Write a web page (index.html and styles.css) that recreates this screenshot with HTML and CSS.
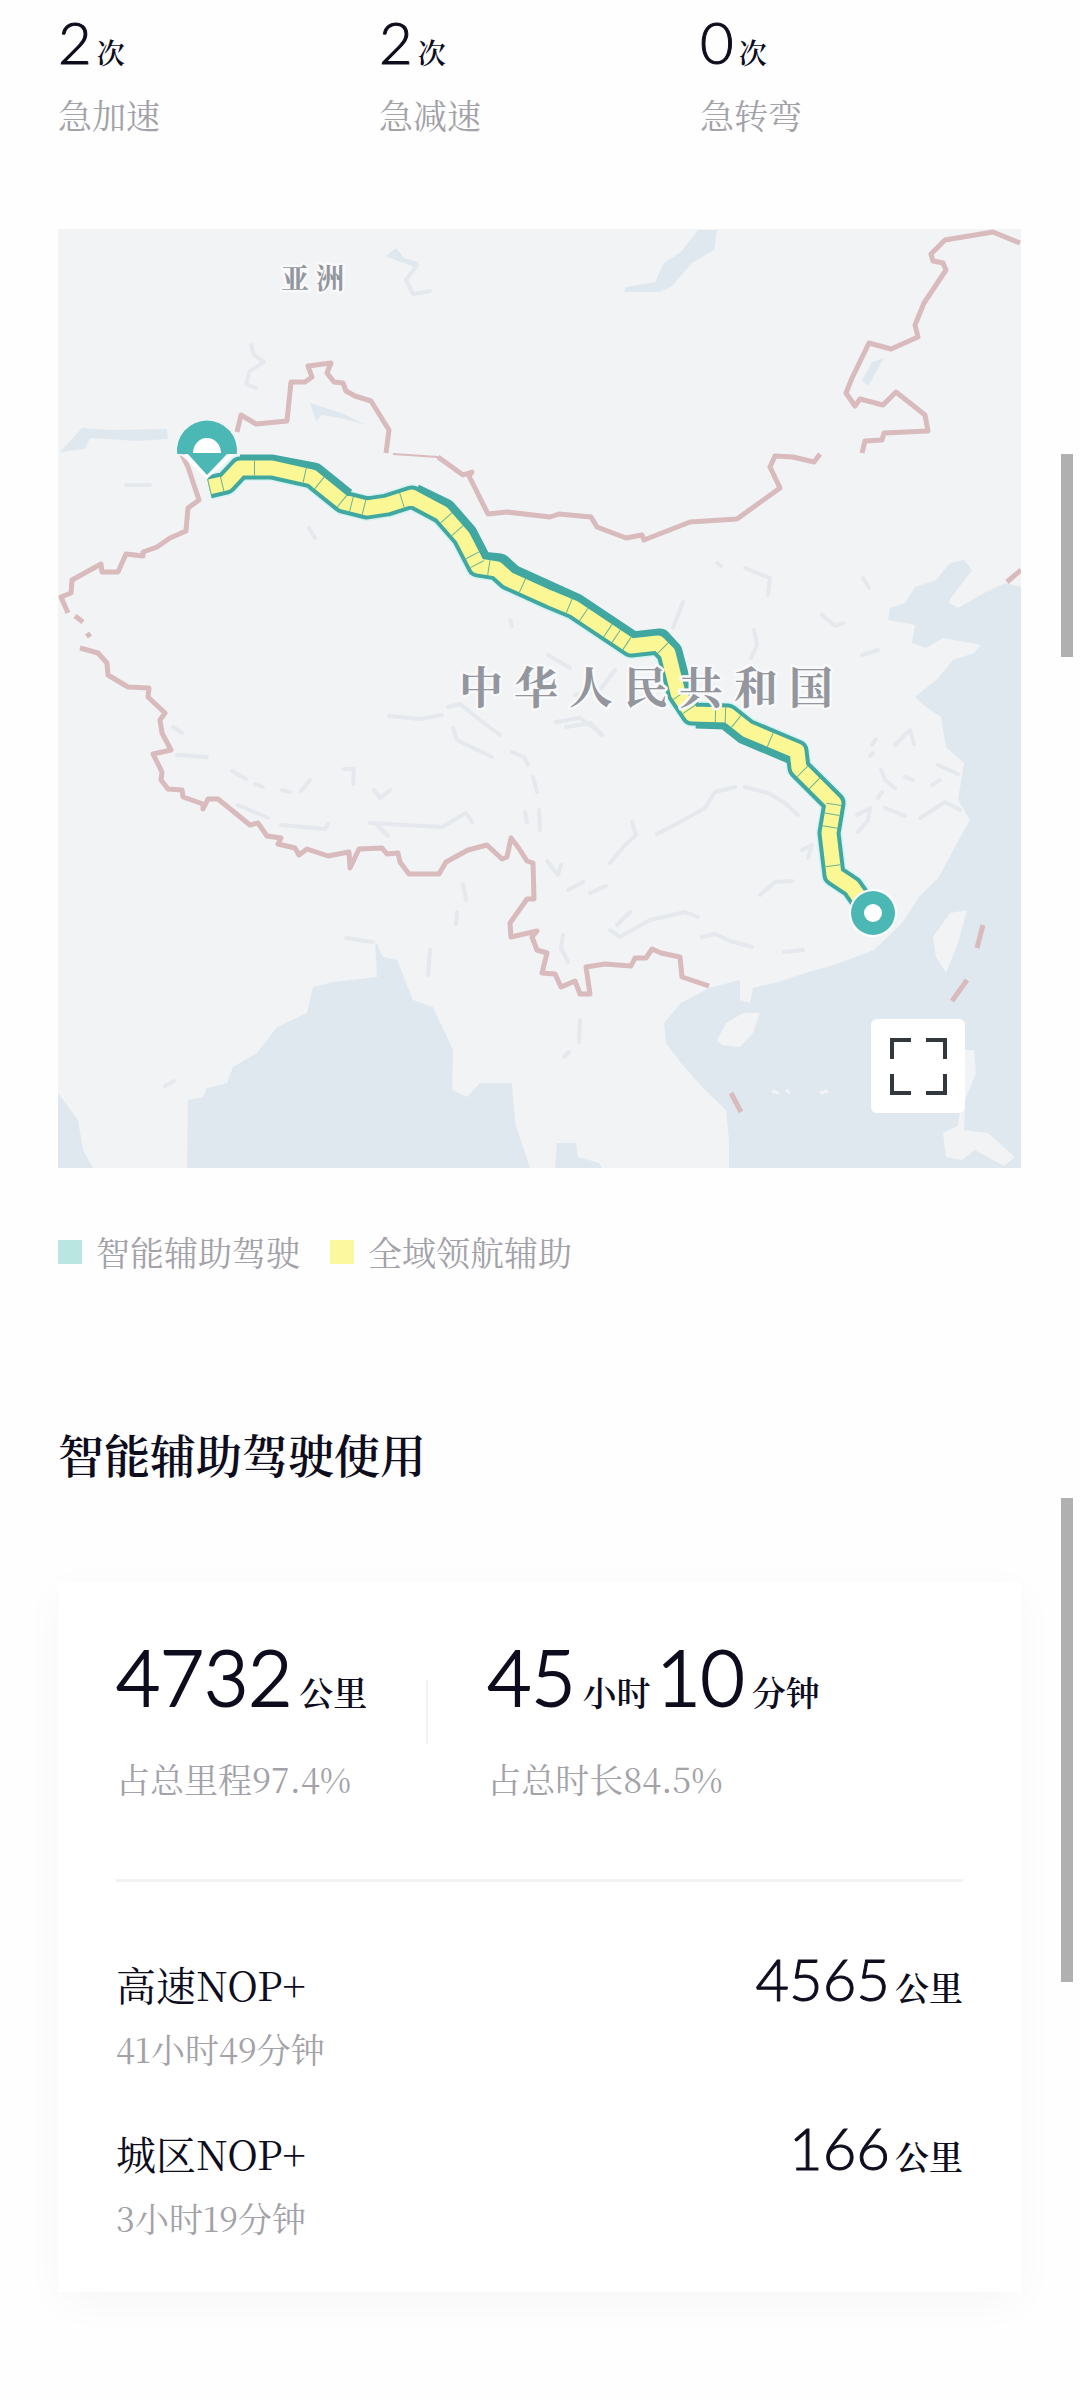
FILE: index.html
```html
<!DOCTYPE html>
<html lang="zh-CN">

<head>
    <meta charset="UTF-8">
    <meta name="viewport" content="width=device-width, initial-scale=1.0">
    <title>智能辅助驾驶</title>
    <link rel="stylesheet" href="styles.css">
</head>

<body>
    <main class="container">
        <div class="stats">
            <div class="stat">
                <div class="value"><span class="num">2</span><span class="unit small">次</span></div>
                <div class="label">急加速</div>
            </div>
            <div class="stat">
                <div class="value"><span class="num">2</span><span class="unit small">次</span></div>
                <div class="label">急减速</div>
            </div>
            <div class="stat">
                <div class="value"><span class="num">0</span><span class="unit small">次</span></div>
                <div class="label">急转弯</div>
            </div>
        </div>

        <div class="map">
            <svg class="map-canvas" viewBox="58 229 963 939" role="img" aria-label="行程路线">
                <rect class="land" x="58" y="229" width="963" height="939" />

                <!-- 海洋 -->
                <g class="water">
                    <path d="M1021 587 1005 583 984 593 958 608 948 602 972 570 964 560 950 563 936 580 915 587 905 603 890 608 888 620 915 625 912 643 926 648 943 638 981 645 974 653 953 660 936 680 915 697 926 707 941 717 946 747 964 763 958 800 970 820 957 843 939 877 919 897 902 923 874 950 840 963 809 972 778 982 753 988 750 1003 740 1000 740 980 709 988 681 1003 664 1023 666 1043 681 1063 702 1087 726 1110 729 1140 729 1168 1021 1168Z" />
                    <path d="M187 1168 188 1100 203 1097 207 1088 227 1083 233 1067 257 1053 277 1027 307 1013 313 987 333 982 377 977 375 940 383 957 397 960 413 1000 433 1007 453 1050 452 1090 467 1097 480 1083 512 1083 515 1123 530 1168Z" />
                    <path d="M58 1093 78 1120 83 1150 93 1168H58Z" />
                    <path d="M557 1143H576L578 1157 599 1163 602 1168H555Z" />
                    <path d="M698 230H717L714 250 692 263 671 287 659 292H624L626 287 655 282 664 263 681 252Z" />
                    <path d="M60 452 82 428 113 430 167 429 168 439 137 441 90 438 85 449Z" />
                    <path d="M386 256 396 248 404 258 418 262 417 270 410 265 400 262Z" />
                    <path d="M310 403 344 414 366 425 340 418 322 415 316 421Z" />
                    <path d="M862 380 872 362 884 358 876 372 868 386Z" />
                </g>

                <!-- 岛屿 -->
                <g class="land">
                    <path d="M717 1040 726 1023 743 1013 760 1013 753 1033 740 1047 722 1045Z" />
                    <path d="M933 937 950 913 967 910 958 943 946 973 936 957Z" />
                    <path d="M960 1110 962 1050 974 1050 976 1073 965 1100 964 1130 988 1133 1015 1157 1004 1166 975 1150 962 1160 946 1157 943 1133 958 1126Z" />
                    <path d="M772 1091 779 1093M786 1090 790 1093M820 1093 828 1091" stroke="#f1f3f5" stroke-width="3" />
                </g>

                <!-- 河流湖泊 -->
                <g class="river">
                    <path d="M417 265 406 280 413 294 430 291" />
                    <path d="M251 345 254 355 264 362 250 371 246 384 256 388" />
                    <path d="M126 485 150 485M309 528 315 538M510 620 512 626" />
                    <path d="M389 716 420 719 442 715M448 707 460 704 480 720 500 735M453 728 457 740 492 757" />
                    <path d="M173 727 182 733M177 755 207 757M232 771 246 779M255 784 263 787M282 790 290 792M301 791 310 780" />
                    <path d="M344 769 354 769 353 784M374 790 380 798 390 790M238 805 268 818M281 825 325 829 328 824M370 823 442 827 466 813 472 822M378 826 388 836" />
                    <path d="M512 752 524 757 528 765M533 777 537 792M539 810 540 830M525 812 527 822" />
                    <path d="M548 655 570 668M575 695 600 690 615 670M556 722 580 718 602 734" />
                    <path d="M683 602 673 628M745 568 770 578 768 595M717 563 721 566M754 630 757 645 751 658M863 578 869 588M822 615 835 626 843 623M862 655 878 650" />
                    <path d="M610 863 625 845 636 835 632 822M657 834 680 822 705 808 715 792 735 787M745 787 768 793 785 803 798 815" />
                    <path d="M547 861 558 875 561 865M568 890 583 882M590 893 606 886M760 895 775 882 792 881M610 930 620 937 650 920 685 912 698 917M617 925 630 912" />
                    <path d="M563 935 561 948 568 962M702 937 715 934 730 941 752 947M784 952 803 950M802 850 812 845 808 858" />
                    <path d="M857 815 870 808 868 820 858 832M885 808 905 816M920 818 945 802 960 810M872 745 876 739M870 756 873 753M895 745 910 730 914 744M881 770 885 780 895 788M932 785 940 780M938 765 958 774M905 777 913 780M878 798 882 792" />
                    <path d="M566 727 590 723 602 735M463 884 466 900M457 912 456 924M346 938 372 942M165 1086 174 1081M430 950 428 975" />
                    <path d="M564 1057 569 1052M580 1020 579 1042" />
                </g>

                <!-- 国界 -->
                <g class="border">
                    <path d="M237 432 241 415 256 424 287 421 291 382 305 382 312 377 308 366 331 363 327 373 334 382 343 383 346 391 355 396 371 401 389 430 386 453" />
                    <path d="M393 454 438 457" stroke-width="2" />
                    <path d="M438 457 463 475 472 472 469 476 488 514 507 512 550 517 559 514 591 517 597 527 626 538 642 535 644 540 690 522 737 519 780 488 770 467 775 456 793 457 814 462 820 454" />
                    <path d="M862 453 865 441 882 440 884 433 928 431 925 415 896 392 883 405 860 399 855 406 846 393 852 378 869 343 891 349 918 337 915 325 924 303 946 270 943 263 933 261 931 254 945 240 993 232 1020 243" />
                    <path d="M1007 582 1021 570" />
                    <path d="M182 455 188 467 199 500 188 508 186 531 170 538 157 547 143 552 143 556 126 554 118 572 102 572 101 564 72 580 71 593 61 597 68 613M75 616 83 622M87 633 90 637" />
                    <path d="M80 648 98 653 107 663 108 675 128 687 149 688 148 697 165 713 160 720 162 733 171 750 153 754 162 772 161 780 168 789 182 790 183 797 203 804 203 809 208 799 218 799 250 825 258 823 267 836 281 838 278 844 295 848 299 855 307 849 328 856 349 852 350 868 359 849 382 848 387 854 398 853 400 862 409 874 439 874 446 862 468 850 487 845 502 859 507 857 511 838 518 847 527 861 533 863 534 899 527 899 510 923 511 937 537 931 532 937 537 950 547 953 542 973 555 974 561 987 575 981 580 994 590 994 586 967 605 964 631 966 635 958 646 958 652 949 661 953 680 957 682 977 709 986" />
                    <path d="M983 925 977 948M967 980 952 1001M731 1093 741 1112" />
                </g>

                <!-- 行驶路线 -->
                <defs>
                    <path id="route" d="M209 487 226 483 240 468 272 468 312 477 343 502 367 508 387 505 412 497 442 513 463 537 478 566 497 569 508 579 550 598 574 608 631 646 658 643 668 653 678 693 692 714 728 715 747 730 797 751 799 768 834 803 829 833 834 875 852 887 866 907" />
                </defs>
                <use href="#route" class="route-halo" />
                <use href="#route" class="route-base" />
                <path class="route-base" d="M240 466 272 466 314 474 345 499M414 495 445 510 466 534 481 563 500 565 512 576 576 605 633 643 660 640 671 652 681 690M696 717 726 718 745 733 795 754" />
                <use href="#route" class="route-nop" />
                <use href="#route" class="route-tick" />

                <text class="place" x="281" y="289">亚 洲</text>
                <text class="place country" x="459" y="704">中 华 人 民 共 和 国</text>

                <!-- 起点 -->
                <path d="M181 455 207 479 233 455" fill="#fff" />
                <path d="M177.2 454A30 30 0 1 1 236.8 454Z" fill="#4cb8b5" />
                <path d="M187 453H228L207 475Z" fill="#4cb8b5" />
                <path d="M193 453A14 15 0 0 1 221 453Z" fill="#fff" />

                <!-- 终点 -->
                <circle cx="873" cy="913" r="24" fill="#fff" />
                <circle cx="873" cy="913" r="22" fill="#4cb8b5" />
                <circle cx="873" cy="913" r="9" fill="#fff" />
            </svg>
            <button class="fullscreen" type="button" aria-label="全屏">
                <svg width="57" height="57" viewBox="0 0 57 57" fill="none" stroke="#33383c" stroke-width="4">
                    <path d="M2 21V2H21M36 2H55V21M55 36V55H36M21 55H2V36" />
                </svg>
            </button>
        </div>

        <div class="legend">
            <div class="legend-item"><i class="swatch teal"></i>智能辅助驾驶</div>
            <div class="legend-item"><i class="swatch yellow"></i>全域领航辅助</div>
        </div>

        <h2 class="title">智能辅助驾驶使用</h2>

        <section class="card">
            <div class="summary">
                <div>
                    <div class="value large"><span class="num">4732</span><span class="unit">公里</span></div>
                    <div class="label">占总里程97.4%</div>
                </div>
                <div class="divider"></div>
                <div>
                    <div class="value large"><span class="num">45</span><span class="unit">小时</span><span class="num next">10</span><span class="unit">分钟</span></div>
                    <div class="label">占总时长84.5%</div>
                </div>
            </div>
            <div class="rows">
                <div class="row">
                    <div class="row-info">
                        <div class="name">高速NOP+</div>
                        <div class="label">41小时49分钟</div>
                    </div>
                    <div class="value"><span class="num">4565</span><span class="unit">公里</span></div>
                </div>
                <div class="row">
                    <div class="row-info">
                        <div class="name">城区NOP+</div>
                        <div class="label">3小时19分钟</div>
                    </div>
                    <div class="value"><span class="num">166</span><span class="unit">公里</span></div>
                </div>
            </div>
        </section>
    </main>

    <div class="scroll-thumb first"></div>
    <div class="scroll-thumb second"></div>
</body>

</html>
```

FILE: styles.css
```css
* {
    box-sizing: border-box;
}

body {
    position: relative;
    margin: 0;
    font-family: "Noto Serif CJK SC", "Liberation Serif", "Noto Sans CJK SC", serif;
    background: #fefefe;
    color: #0d0d1e;
}

.container {
    padding: 7px 59px 108px 58px;
}

/* 数值 */
.value {
    display: flex;
    align-items: baseline;
    height: 70px;
    font-size: 58px;
    line-height: 70px;
}

.value.large {
    height: 94px;
    font-size: 76px;
    line-height: 94px;
}

.num {
    font-family: Lato, "Liberation Sans", sans-serif;
    font-weight: 300;
    -webkit-text-stroke: 1px currentColor;
}

.large .num {
    -webkit-text-stroke-width: 2px;
}

.num.next {
    margin-left: 6px;
}

.unit {
    margin-left: 5px;
    font-size: 34px;
    font-weight: 600;
    line-height: 1;
}

.large .unit {
    margin-left: 7px;
}

.unit.small {
    font-size: 28px;
}

.label {
    font-size: 34px;
    line-height: 48px;
    color: #a2a2a8;
}

.stats {
    display: grid;
    grid-template-columns: repeat(3, 1fr);
    margin-bottom: 90px;
}

.stat .label {
    margin-top: 14px;
}

/* 地图 */
.map {
    position: relative;
    margin-bottom: 60px;
}

.map-canvas {
    display: block;
    width: 100%;
    height: auto;
}

.land {
    fill: #f1f3f5;
}

.water {
    fill: #e0e8ef;
}

.river {
    fill: none;
    stroke: #e5e9ed;
    stroke-width: 4;
    stroke-linecap: round;
    stroke-linejoin: round;
}

.border {
    fill: none;
    stroke: #d9babd;
    stroke-width: 5;
    stroke-linejoin: round;
}

.route-halo,
.route-base,
.route-nop,
.route-tick {
    fill: none;
    stroke-linejoin: round;
}

.route-halo {
    stroke: #d5f3f3;
    stroke-width: 26;
}

.route-base {
    stroke: #40a8a0;
    stroke-width: 23;
}

.route-nop {
    stroke: #fbf794;
    stroke-width: 15;
}

.route-tick {
    stroke: #6bb494;
    stroke-width: 15;
    stroke-dasharray: 1 12 1 38 1 50 1 16 1 28 1 9;
}

.place {
    font-size: 28px;
    font-weight: 700;
    fill: #94969d;
    stroke: #f8f9fa;
    stroke-width: 5;
    stroke-linejoin: round;
    paint-order: stroke;
}

.place.country {
    font-size: 44px;
}

.fullscreen {
    position: absolute;
    right: 56px;
    bottom: 55px;
    display: flex;
    align-items: center;
    justify-content: center;
    width: 94px;
    height: 94px;
    padding: 0;
    border: none;
    border-radius: 6px;
    background: #fff;
    cursor: pointer;
}

/* 图例 */
.legend {
    display: flex;
    gap: 30px;
    margin-bottom: 145px;
}

.legend-item {
    display: flex;
    align-items: center;
    gap: 14px;
    font-size: 34px;
    line-height: 48px;
    color: #a2a2a8;
}

.swatch {
    width: 24px;
    height: 24px;
}

.swatch.teal {
    background: #bae6e2;
}

.swatch.yellow {
    background: #fbf8a0;
}

.title {
    margin: 0 0 97px;
    font-size: 46px;
    font-weight: 600;
    line-height: 64px;
}

/* 使用情况卡片 */
.card {
    padding: 48px 58px 50px;
    background: #fff;
    box-shadow: 0 10px 40px rgba(0, 0, 0, 0.03);
}

.summary {
    display: flex;
    gap: 59px;
    padding-bottom: 76px;
    border-bottom: 3px solid #f2f2f3;
}

.summary .label {
    margin-top: 31px;
}

.divider {
    width: 2px;
    height: 64px;
    margin-top: 50px;
    background: #f1f1f2;
}

.rows {
    display: flex;
    flex-direction: column;
    gap: 40px;
    padding-top: 62px;
}

.row {
    display: flex;
    justify-content: space-between;
    align-items: flex-start;
}

.row-info {
    padding-top: 12px;
}

.name {
    margin-bottom: 13px;
    font-size: 40px;
    line-height: 56px;
}

/* 滚动条 */
.scroll-thumb {
    position: absolute;
    right: 7px;
    width: 12px;
    background: #b0b0b0;
}

.scroll-thumb.first {
    top: 454px;
    height: 203px;
}

.scroll-thumb.second {
    top: 1498px;
    height: 484px;
}
```
